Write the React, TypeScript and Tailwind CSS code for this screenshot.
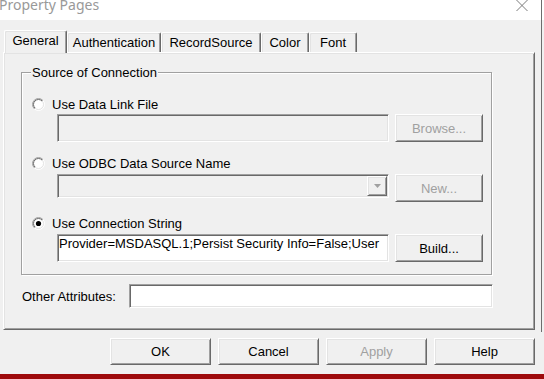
const raised =
  "border border-t-white border-l-white border-r-[#696969] border-b-[#696969] shadow-[inset_1px_1px_0_#e3e3e3,inset_-1px_-1px_0_#a0a0a0]";
const sunken =
  "border border-t-[#a0a0a0] border-l-[#a0a0a0] border-r-white border-b-white shadow-[inset_1px_1px_0_#696969,inset_-1px_-1px_0_#e3e3e3]";

function Radio({ checked }: { checked?: boolean }) {
  return (
    <svg width="13" height="13" viewBox="0 0 13 13" className="shrink-0">
      <defs>
        <linearGradient id="radioOuter" x1="0" y1="0" x2="1" y2="1">
          <stop offset="0.5" stopColor="#a0a0a0" />
          <stop offset="0.5" stopColor="#ffffff" />
        </linearGradient>
        <linearGradient id="radioInner" x1="0" y1="0" x2="1" y2="1">
          <stop offset="0.5" stopColor="#696969" />
          <stop offset="0.5" stopColor="#e3e3e3" />
        </linearGradient>
      </defs>
      <circle cx="6.5" cy="6.5" r="6" fill="none" stroke="url(#radioOuter)" strokeWidth="1" />
      <circle cx="6.5" cy="6.5" r="5" fill="#ffffff" stroke="url(#radioInner)" strokeWidth="1" />
      {checked && <circle cx="6.5" cy="6.5" r="2.6" fill="#000" />}
    </svg>
  );
}

function Btn({ label, disabled, className = "" }: { label: string; disabled?: boolean; className?: string }) {
  return (
    <button
      type="button"
      className={`${raised} ${className} flex items-center justify-center shrink-0 ${disabled ? "text-[#a0a0a0]" : "text-black"}`}
    >
      {label}
    </button>
  );
}

function RadioRow({ label, checked }: { label: string; checked?: boolean }) {
  return (
    <div className="h-[16px] flex items-center pl-[10px] gap-[7px]">
      <Radio checked={checked} />
      <span>{label}</span>
    </div>
  );
}

const tabs = [
  { label: "Authentication", w: "w-[94px]" },
  { label: "RecordSource", w: "w-[100px]" },
  { label: "Color", w: "w-[48px]" },
  { label: "Font", w: "w-[48px]" },
];

export default function App() {
  return (
    <div className="relative w-[544px] h-[379px] overflow-hidden bg-[#f0f0f0] font-['Liberation_Sans',Arial,sans-serif] text-[13px] leading-[15px] text-black flex flex-col">
      {/* title bar */}
      <div className="h-[20px] shrink-0 bg-white flex items-start justify-between">
        <span className="-ml-[1px] -mt-[2px] font-['Noto_Sans',sans-serif] text-[14px] leading-[14px] text-[#999999]">
          Property Pages
        </span>
        <svg width="12" height="11" viewBox="0 0 12 11" className="mr-[16px]">
          <path d="M0.5 0 L11.5 11 M11.5 0 L0.5 11" stroke="#7a7a7a" strokeWidth="1" />
        </svg>
      </div>

      {/* tabs */}
      <div className="mt-[10px] pl-[4px] h-[22px] flex items-end relative z-10 shrink-0">
        <div className="w-[63px] h-[23px] -mb-[1px] pb-[3px] bg-[#f0f0f0] border-t border-l border-t-white border-l-white border-r border-r-[#696969] shadow-[inset_-1px_0_0_#a0a0a0,inset_1px_1px_0_#e3e3e3] rounded-t-[2px] flex items-center justify-center">
          General
        </div>
        {tabs.map((t) => (
          <div
            key={t.label}
            className={`${t.w} h-[20px] border-t border-l border-t-white border-l-white border-r border-r-[#696969] shadow-[inset_-1px_0_0_#a0a0a0,inset_1px_1px_0_#e3e3e3] rounded-t-[2px] flex items-center justify-center`}
          >
            {t.label}
          </div>
        ))}
      </div>

      {/* tab page */}
      <div className={`${raised} ml-[3px] w-[532px] h-[278px] shrink-0 flex flex-col`}>
        <div className="relative ml-[17px] mt-[19px] w-[471px] border border-[#a0a0a0] shadow-[1px_1px_0_#fff,inset_1px_1px_0_#fff] pt-[23px] pb-[12px]">
          <span className="absolute left-[9px] -top-[8px] px-[1px] bg-[#f0f0f0]">Source of Connection</span>

          <RadioRow label="Use Data Link File" />
          <div className="mt-[2px] flex items-start pl-[35px] gap-[6px]">
            <div className={`${sunken} w-[332px] h-[28px] bg-[#f0f0f0]`} />
            <Btn label="Browse..." disabled className="w-[88px] h-[28px]" />
          </div>

          <div className="mt-[13px]">
            <RadioRow label="Use ODBC Data Source Name" />
          </div>
          <div className="mt-[3px] flex items-start pl-[35px] gap-[6px]">
            <div className={`${sunken} w-[332px] h-[24px] bg-[#f0f0f0] flex justify-end items-start`}>
              <div className={`${raised} mt-[1px] mr-[1px] w-[20px] h-[20px] flex items-center justify-center`}>
                <svg width="7" height="4" viewBox="0 0 7 4">
                  <path d="M0 0 H7 L3.5 4 Z" fill="#a0a0a0" />
                </svg>
              </div>
            </div>
            <Btn label="New..." disabled className="w-[88px] h-[28px]" />
          </div>

          <div className="mt-[13px]">
            <RadioRow label="Use Connection String" checked />
          </div>
          <div className="mt-[3px] flex items-start pl-[35px] gap-[6px]">
            <div className={`${sunken} w-[332px] h-[28px] bg-white overflow-hidden whitespace-nowrap pl-[1px] pt-[1px]`}>
              Provider=MSDASQL.1;Persist Security Info=False;User
            </div>
            <Btn label="Build..." className="w-[88px] h-[28px]" />
          </div>
        </div>

        <div className="mt-[9px] flex items-center pl-[18px]">
          <span className="w-[107px] shrink-0">Other Attributes:</span>
          <div className={`${sunken} w-[364px] h-[24px] bg-white`} />
        </div>
      </div>

      {/* dialog buttons */}
      <div className="mt-[8px] flex justify-end gap-[7px] pr-[9px] shrink-0">
        <Btn label="OK" className="w-[101px] h-[27px]" />
        <Btn label="Cancel" className="w-[101px] h-[27px]" />
        <Btn label="Apply" disabled className="w-[101px] h-[27px]" />
        <Btn label="Help" className="w-[101px] h-[27px]" />
      </div>

      <div className="mt-auto h-[5px] bg-[#9e0a0c] shrink-0" />

      <div className="absolute left-[541px] top-0 h-[332px] w-[1px] bg-[#6d6d6d]" />
    </div>
  );
}
